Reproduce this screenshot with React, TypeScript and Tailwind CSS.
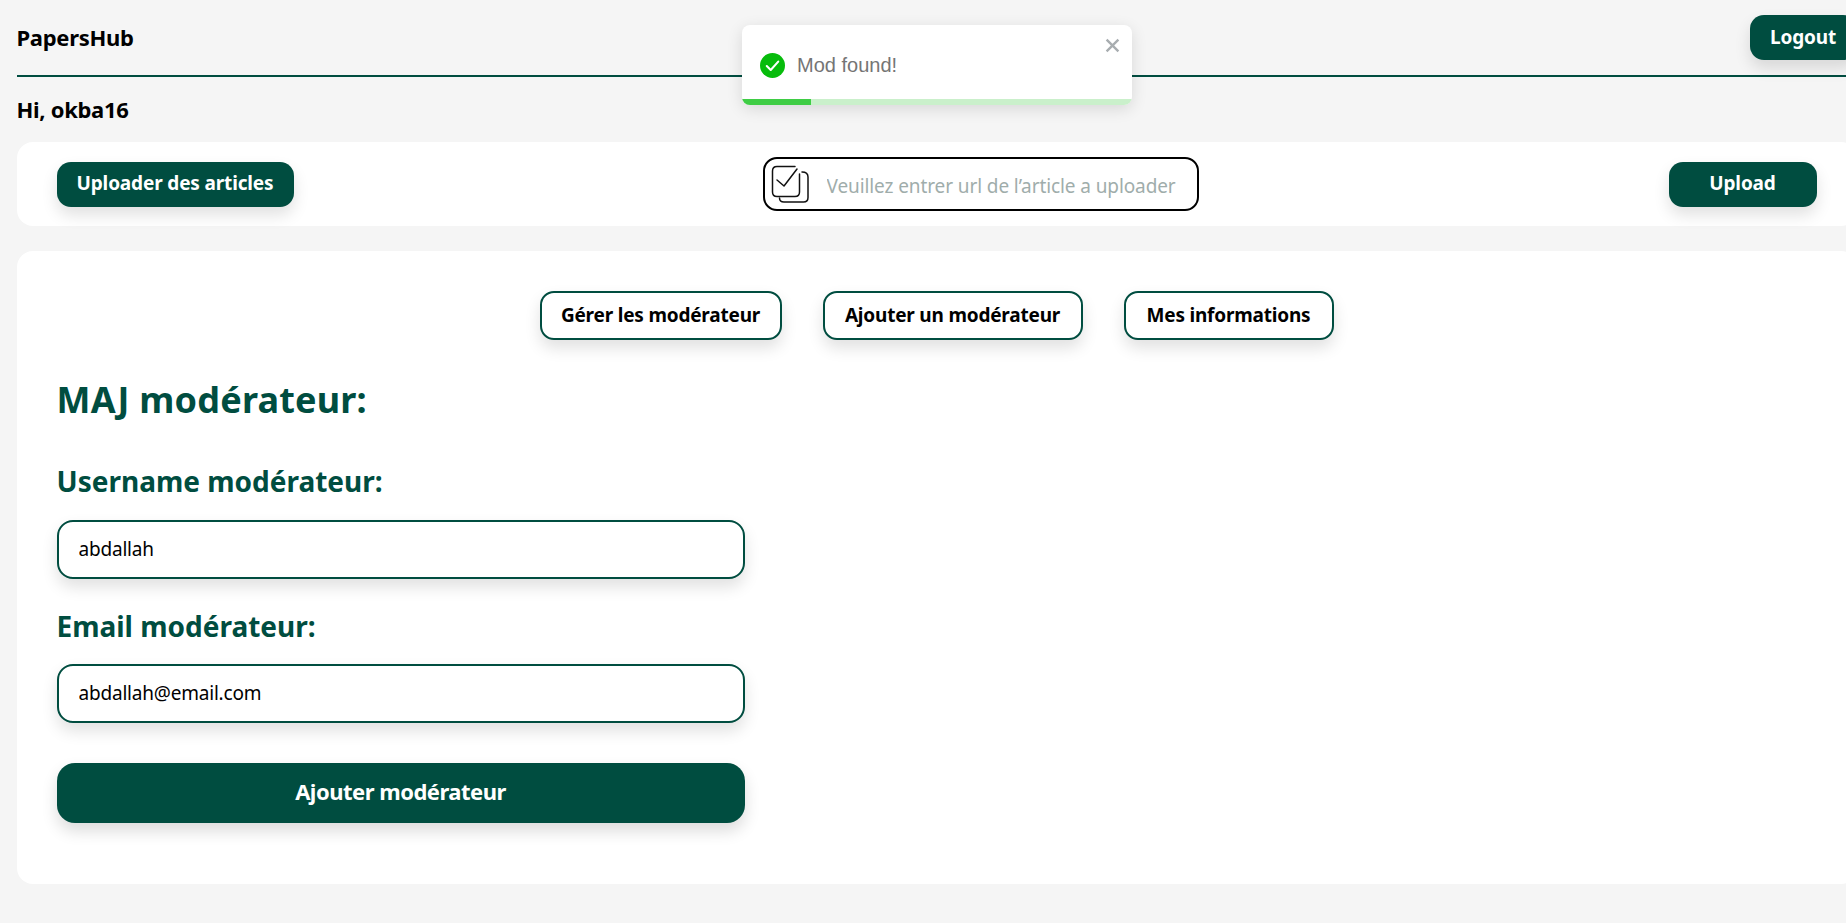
const F = "font-['Noto_Sans','Open_Sans',sans-serif]";

function PrimaryButton({ label, className }: { label: string; className: string }) {
  return (
    <button
      className={`${className} h-[45px] rounded-[14px] bg-[#004d40] pb-[1px] text-[19px] font-bold tracking-[-0.15px] text-white shadow-[0_8px_16px_rgba(0,0,0,0.12)]`}
    >
      {label}
    </button>
  );
}

function Tab({ label, width }: { label: string; width: string }) {
  return (
    <button
      className={`${width} h-[49px] rounded-[14px] border-2 border-[#004d40] bg-white pb-[1px] text-[19px] font-bold tracking-[-0.2px] text-black shadow-[0_8px_16px_rgba(0,0,0,0.12)]`}
    >
      {label}
    </button>
  );
}

function Field({ label, value, top, gap }: { label: string; value: string; top: string; gap: string }) {
  return (
    <div className={top}>
      <h3 className="text-[28px] leading-[38px] font-bold text-[#004d40]">{label}</h3>
      <input
        readOnly
        value={value}
        className={`${gap} block h-[59px] w-[688px] rounded-[16px] border-2 border-[#004d40] bg-white px-[20px] pb-[2px] text-[19px] tracking-[-0.2px] text-black shadow-[0_8px_16px_rgba(0,0,0,0.12)] outline-none`}
      />
    </div>
  );
}

export default function App() {
  return (
    <div className={`${F} relative h-[923px] w-full overflow-hidden bg-[#f5f5f5]`}>
      <div className="ml-[16.5px] w-[1840px]">
        <header className="flex h-[77px] items-start justify-between border-b-2 border-[#004d40] pt-[15px]">
          <div className="text-[22px] leading-[45px] font-bold tracking-[-0.3px] text-black">PapersHub</div>
          <PrimaryButton label="Logout" className="w-[107px]" />
        </header>
        <div className="mt-[18px] text-[22px] leading-[28px] font-bold tracking-[-0.3px] text-black">Hi, okba16</div>

        <section className="mt-[19px] flex h-[84px] items-center justify-between rounded-[16px] bg-white px-[40px]">
          <PrimaryButton label="Uploader des articles" className="w-[237px]" />
          <div className="ml-[-1px] flex h-[54px] w-[436px] items-center rounded-[14px] border-2 border-black bg-white pl-[6px]">
            <svg width="38" height="38" viewBox="0 0 38 38" fill="none" stroke="#111" strokeWidth="1.5" strokeLinecap="round" strokeLinejoin="round">
              <path d="M24 1.500H6C3 1.500 1.500 3 1.500 6v21c0 3 1.500 4.500 4.500 4.500h18c3 0 4.500-1.500 4.500-4.500V9" />
              <path d="M31 7c4 0 6 2 6 5v20.500c0 3-1.500 4.500-4.500 4.500H13c-3 0-4.500-1.500-4.500-4" />
              <path d="M6 15l7 6L26 4" />
            </svg>
            <input
              readOnly
              placeholder="Veuillez entrer url de l’article a uploader"
              className="mt-[4px] ml-[18px] w-[370px] bg-transparent text-[19px] tracking-[-0.1px] outline-none placeholder:text-[#9fadab]"
            />
          </div>
          <PrimaryButton label="Upload" className="w-[148px]" />
        </section>

        <section className="mt-[25px] h-[633px] rounded-[16px] bg-white px-[40px] pt-[40px]">
          <nav className="flex justify-center gap-[41px]">
            <Tab label="Gérer les modérateur" width="w-[242px]" />
            <Tab label="Ajouter un modérateur" width="w-[260px]" />
            <Tab label="Mes informations" width="w-[210px]" />
          </nav>
          <h2 className="mt-[35px] text-[36px] leading-[50px] font-bold tracking-[0.2px] text-[#004d40]">MAJ modérateur:</h2>
          <Field label="Username modérateur:" value="abdallah" top="mt-[37px]" gap="mt-[20px]" />
          <Field label="Email modérateur:" value="abdallah@email.com" top="mt-[28px]" gap="mt-[19px]" />
          <button className="mt-[40px] h-[60px] w-[688px] rounded-[18px] bg-[#004d40] pb-[3px] text-[22px] font-bold tracking-[-0.5px] text-white shadow-[0_8px_16px_rgba(0,0,0,0.14)]">
            Ajouter modérateur
          </button>
        </section>
      </div>

      <div className="absolute top-[25px] left-[742px] h-[80px] w-[390px] overflow-hidden rounded-[8px] bg-white shadow-[0_4px_16px_rgba(0,0,0,0.12)]">
        <div className="flex h-[74px] items-center pt-[6px] pl-[18px]">
          <svg width="25" height="25" viewBox="0 0 24 24">
            <circle cx="12" cy="12" r="12" fill="#07bc0c" />
            <path d="M6.500 12.500l3.800 3.800 7.200-8" fill="none" stroke="#fff" strokeWidth="2" strokeLinecap="round" strokeLinejoin="round" />
          </svg>
          <span className="ml-[12px] font-['Liberation_Sans',sans-serif] text-[20px] text-[#757575]">Mod found!</span>
        </div>
        <svg className="absolute top-[13px] right-[12px]" width="15" height="15" viewBox="0 0 14 14">
          <path d="M1.500 1.500l11 11M12.500 1.500l-11 11" stroke="#a8adb0" strokeWidth="2.200" />
        </svg>
        <div className="absolute right-0 bottom-0 left-0 h-[6px] bg-[#caf0cb]">
          <div className="h-full w-[69px] bg-[#3fcd45]" />
        </div>
      </div>
    </div>
  );
}
